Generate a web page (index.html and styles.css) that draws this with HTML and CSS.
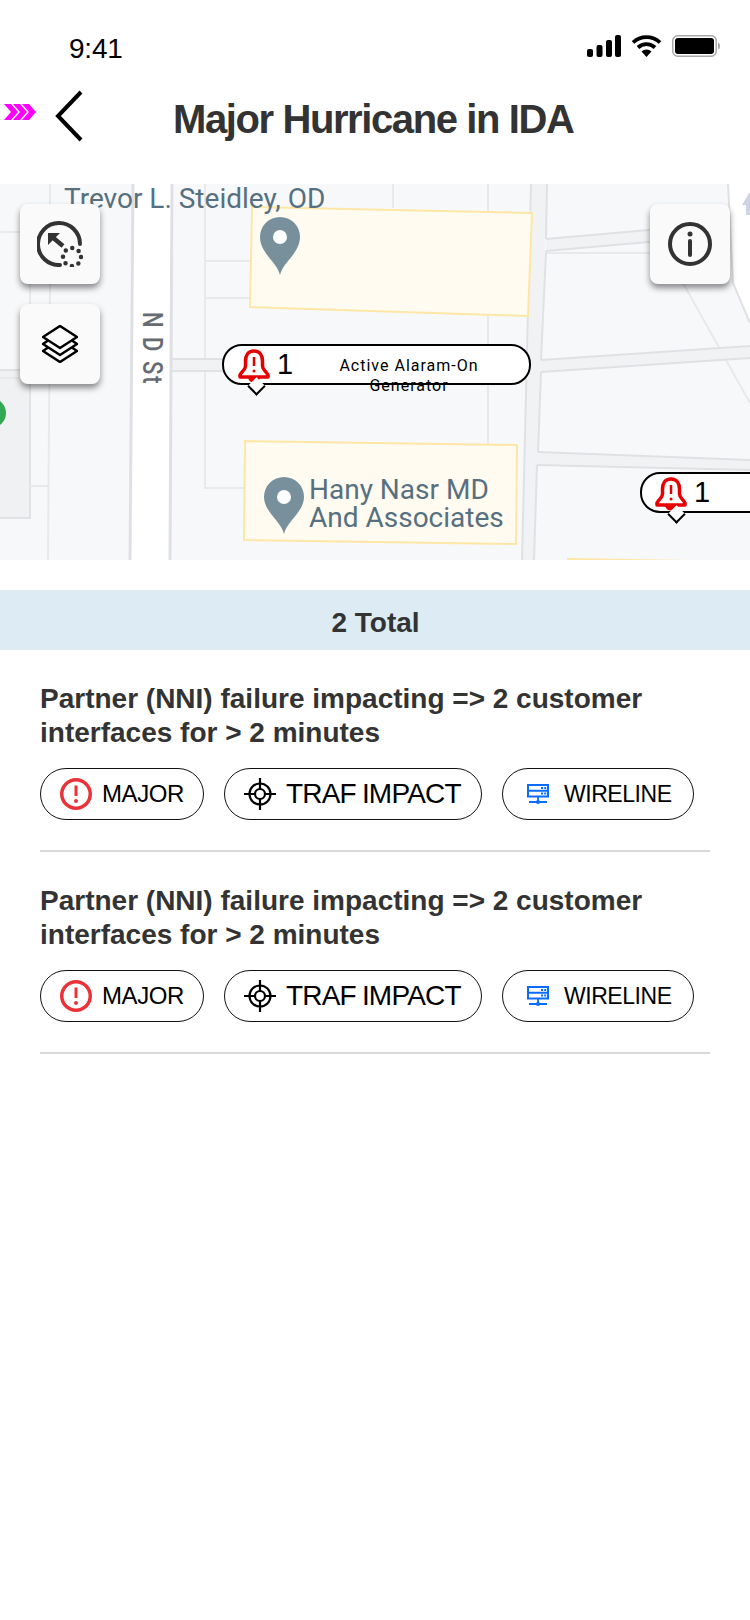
FILE: index.html
```html
<!DOCTYPE html>
<html lang="en">
  <head>
    <meta charset="UTF-8" />
    <meta name="viewport" content="width=device-width, initial-scale=1.0" />
    <title>Major Hurricane in IDA</title>
    <link rel="stylesheet" href="styles.css">
  </head>
  <body>
    <svg class="defs" width="0" height="0">
      <symbol id="bell" viewBox="0 0 32 34">
        <path d="M16 2C10 2 7.500 6.500 7.500 12V17C7.500 21 3.500 22.500 2 26V28H30V26C28.500 22.500 24.500 21 24.500 17V12C24.500 6.500 22 2 16 2Z" fill="none" stroke="#e60000" stroke-width="3.500" stroke-linejoin="round" />
        <path d="M16 8V17" stroke="#e60000" stroke-width="2.500" />
        <circle cx="16" cy="22" r="1.500" fill="#e60000" />
        <path d="M10 28H22A6 5.500 0 0 1 10 28Z" fill="#e60000" />
      </symbol>
      <symbol id="major" viewBox="0 0 32 32">
        <circle cx="16" cy="16" r="14.250" fill="none" stroke="#ea3339" stroke-width="3.500" />
        <path d="M16 7.500V18" stroke="#ea3339" stroke-width="3" />
        <circle cx="16" cy="23" r="2" fill="#ea3339" />
      </symbol>
      <symbol id="target" viewBox="0 0 32 32">
        <g fill="none" stroke="#000">
          <circle cx="16" cy="16" r="10.500" stroke-width="2.200" />
          <circle cx="16" cy="16" r="5" stroke-width="2.200" />
          <path d="M16 0V12M16 20V32M0 16H12M20 16H32" stroke-width="2.200" />
        </g>
      </symbol>
      <symbol id="server" viewBox="0 0 22 20">
        <g fill="none" stroke="#0a6cff">
          <rect x="1" y="1" width="20" height="11.500" stroke-width="2" />
          <path d="M1 6.750H21" stroke-width="2" />
          <path d="M11 12V17M2 18H20" stroke-width="1.800" />
        </g>
        <path d="M14 3h2v2h-2zM17.200 3h2v2h-2zM14 8.500h2v2h-2zM17.200 8.500h2v2h-2z" fill="#0a6cff" />
        <circle cx="11" cy="18" r="2" fill="#0a6cff" />
      </symbol>
    </svg>

    <div class="status-bar">
      <span class="time">9:41</span>
      <div class="status-icons">
        <svg width="34" height="22" viewBox="0 0 34 22">
          <rect x="0" y="14" width="6" height="8" rx="2" />
          <rect x="9.500" y="10" width="6" height="12" rx="2" />
          <rect x="19" y="5" width="6" height="17" rx="2" />
          <rect x="28" y="0" width="6" height="22" rx="2" />
        </svg>
        <svg width="31" height="22" viewBox="0 0 31 22">
          <path d="M2 7.500A19.500 19.500 0 0 1 29 7.500M7 12.500A12.500 12.500 0 0 1 24 12.500" fill="none" stroke="#000" stroke-width="3.800" />
          <path d="M10.500 16.500A7 7 0 0 1 20.500 16.500L15.500 22Z" />
        </svg>
        <svg width="48" height="22" viewBox="0 0 48 22">
          <rect x="0.750" y="0.750" width="43.500" height="20.500" rx="5" fill="none" stroke="#a8a8a8" stroke-width="1.500" />
          <rect x="3" y="3" width="39" height="16" rx="3" />
          <path d="M46 7.500C47.500 8 48 9.500 48 11S47.500 14 46 14.500Z" fill="#a8a8a8" />
        </svg>
      </div>
    </div>

    <div class="nav-bar">
      <svg class="nav-arrows" width="32" height="16" viewBox="0 0 32 16">
        <path d="M0 0H7L14 8L7 16H0L7 8ZM9 0H16L23 8L16 16H9L16 8ZM18 0H25L32 8L25 16H18L25 8Z" fill="#ff00ff" />
      </svg>
      <svg class="nav-back" width="28" height="52" viewBox="0 0 28 52">
        <path d="M26 2L3 26L26 50" fill="none" stroke="#000" stroke-width="4" />
      </svg>
      <h1 class="nav-title">Major Hurricane in IDA</h1>
    </div>

    <div class="map">
      <svg class="map-base" width="750" height="376" viewBox="0 184 750 376">
        <rect x="0" y="184" width="750" height="376" fill="#f7f8fa" />
        <path d="M-2 370H30V518H-2Z" fill="#f0f1f3" stroke="#e1e2e5" stroke-width="2" />
        <circle cx="-9" cy="413" r="15" fill="#34a853" />

        <g fill="none" stroke="#e8e9eb" stroke-width="2">
          <path d="M0 232H50V184M30 284V370M50 284L48 560M30 486H48M0 378H20" />
          <path d="M205 184V488H245M205 261H252M205 298H250" />
          <path d="M393 184V208M488 184V212M488 316V512" />
          <path d="M683 283L750 403" />
          <path d="M545 253H650" />
        </g>

        <path d="M728 184L733 283L750 323V184Z" fill="#fff" />
        <path d="M728 184L733 283L750 323" fill="none" stroke="#e0e1e5" stroke-width="2" />
        <path d="M749 193L742 205H746V215H750V193Z" fill="#cfd3e6" />

        <g fill="#f1f2f4">
          <path d="M172 359H530V371H172Z" />
          <path d="M541 360L750 346V358L541 372Z" />
          <path d="M546 239L660 229V241L546 251Z" />
          <path d="M538 452L750 460V470L537 465Z" />
          <path d="M531 184H547L534 560H522Z" />
        </g>
        <g fill="none" stroke="#e0e1e5" stroke-width="2">
          <path d="M172 359H530M172 371H530" />
          <path d="M541 360L750 346M541 372L750 358" />
          <path d="M546 239L660 229M546 251L660 241" />
          <path d="M538 452L750 460M537 465L750 470" />
          <path d="M531 184L522 560" />
          <path d="M547 184L546 239M546 251L541 360M541 372L538 452M537 465L534 560" />
        </g>

        <path d="M133 184H172L170 560H130Z" fill="#fff" />
        <path d="M133 184L130 560M172 184L170 560" fill="none" stroke="#dfe0e4" stroke-width="3" />

        <g fill="#fffbf0" stroke="#fde6a6" stroke-width="2">
          <path d="M252 207L532 213L528 316L250 307Z" />
          <path d="M245 441L517 445L516 544L244 540Z" />
          <path d="M568 559L750 562V580H568Z" />
        </g>

        <path d="M280 275C277 262 260 253 260 237A20 20 0 0 1 300 237C300 253 283 262 280 275Z" fill="#78909c" />
        <circle cx="280" cy="237" r="7" fill="#fff" />
        <path d="M284 534C281 521 264 512 264 497A20 20 0 0 1 304 497C304 512 287 521 284 534Z" fill="#78909c" />
        <circle cx="284" cy="497" r="7" fill="#fff" />
      </svg>

      <span class="map-label label-trevor">Trevor L. Steidley, OD</span>
      <span class="map-label label-hany">Hany Nasr MD<br>And Associates</span>
      <span class="street-label">N D St</span>

      <button class="map-btn btn-recenter">
        <svg width="46" height="46" viewBox="0 0 46 46">
          <path d="M43 23A21 21 0 1 0 23 44" fill="none" stroke="#333" stroke-width="4" stroke-linecap="round" />
          <path d="M14 15L26 25" stroke="#333" stroke-width="4.500" />
          <path d="M11 12H23L11 24Z" fill="#333" />
          <circle cx="35" cy="36" r="9" fill="none" stroke="#333" stroke-width="4.500" stroke-linecap="round" stroke-dasharray="0 7.070" />
        </svg>
      </button>
      <button class="map-btn btn-layers">
        <svg width="36" height="38" viewBox="0 0 36 38">
          <g fill="none" stroke="#000" stroke-width="2.500" stroke-linejoin="round">
            <path d="M18 1L35 12L18 23L1 12Z" />
            <path d="M6 15.500L1 19L18 30L35 19L30 15.500" />
            <path d="M6 22.500L1 26L18 37L35 26L30 22.500" />
          </g>
        </svg>
      </button>
      <button class="map-btn btn-info">
        <svg width="44" height="44" viewBox="0 0 44 44">
          <circle cx="22" cy="22" r="20" fill="none" stroke="#333" stroke-width="4" />
          <circle cx="22" cy="12" r="2.500" fill="#333" />
          <path d="M22 19V33" stroke="#333" stroke-width="4" stroke-linecap="round" />
        </svg>
      </button>

      <div class="alert alert-one">
        <svg class="alert-bell" width="32" height="34"><use href="#bell" /></svg>
        <span class="alert-count">1</span>
        <span class="alert-text">Active Alaram-On Generator</span>
      </div>
      <div class="alert alert-two">
        <svg class="alert-bell" width="32" height="34"><use href="#bell" /></svg>
        <span class="alert-count">1</span>
      </div>
    </div>

    <div class="total-band">2 Total</div>

    <div class="list">
      <div class="item">
        <div class="item-title">Partner (NNI) failure impacting =&gt; 2 customer interfaces for &gt; 2 minutes</div>
        <div class="chips">
          <div class="chip chip-major">
            <svg width="32" height="32"><use href="#major" /></svg>
            <span>MAJOR</span>
          </div>
          <div class="chip chip-traf">
            <svg width="32" height="32"><use href="#target" /></svg>
            <span>TRAF IMPACT</span>
          </div>
          <div class="chip chip-wire">
            <svg width="22" height="20"><use href="#server" /></svg>
            <span>WIRELINE</span>
          </div>
        </div>
      </div>
      <div class="item">
        <div class="item-title">Partner (NNI) failure impacting =&gt; 2 customer interfaces for &gt; 2 minutes</div>
        <div class="chips">
          <div class="chip chip-major">
            <svg width="32" height="32"><use href="#major" /></svg>
            <span>MAJOR</span>
          </div>
          <div class="chip chip-traf">
            <svg width="32" height="32"><use href="#target" /></svg>
            <span>TRAF IMPACT</span>
          </div>
          <div class="chip chip-wire">
            <svg width="22" height="20"><use href="#server" /></svg>
            <span>WIRELINE</span>
          </div>
        </div>
      </div>
    </div>
  </body>
</html>
```

FILE: styles.css
```css
body {
  margin: 0;
  overflow: hidden;
  background: #ffffff;
  font-family: 'Liberation Sans', Arial, sans-serif;
  color: #333333;
}
svg {
  display: block;
  flex: none;
}
.defs {
  position: absolute;
}

.status-bar {
  height: 74px;
  box-sizing: border-box;
  padding: 33px 30px 0 69px;
  display: flex;
  justify-content: space-between;
  align-items: flex-start;
}
.time {
  font-size: 28px;
  line-height: 32px;
  letter-spacing: -0.2px;
  color: #000000;
}
.status-icons {
  display: flex;
  align-items: center;
  gap: 10px;
  padding-top: 2px;
}

.nav-bar {
  height: 110px;
  box-sizing: border-box;
  padding: 18px 0 0 4px;
  display: flex;
  align-items: flex-start;
}
.nav-arrows {
  margin-top: 12px;
}
.nav-back {
  margin-left: 19px;
  margin-top: -2px;
}
.nav-title {
  margin: 5px 0 0 90px;
  font-size: 40px;
  line-height: 44px;
  font-weight: bold;
  letter-spacing: -1.4px;
  white-space: nowrap;
  color: #333333;
}

.map {
  position: relative;
  height: 376px;
  overflow: hidden;
}
.map-label {
  position: absolute;
  font-family: Roboto, sans-serif;
  font-size: 28px;
  line-height: 28px;
  color: #56707f;
  white-space: nowrap;
}
.label-trevor {
  left: 64px;
  top: 1px;
}
.label-hany {
  left: 309px;
  top: 292px;
}
.street-label {
  position: absolute;
  left: 130px;
  top: 128px;
  font-family: Roboto, sans-serif;
  font-size: 22px;
  line-height: 26px;
  font-weight: 500;
  letter-spacing: 2px;
  color: #666b72;
  white-space: nowrap;
  transform: rotate(90deg) scaleY(1.28);
  transform-origin: 17px 17px;
}

.map-btn {
  position: absolute;
  width: 80px;
  height: 80px;
  padding: 0;
  border: 0;
  border-radius: 8px;
  background: #fafafa;
  box-shadow: 0 4px 6px rgba(0, 0, 0, 0.45);
  display: flex;
  align-items: center;
  justify-content: center;
}
.btn-recenter {
  left: 20px;
  top: 20px;
}
.btn-layers {
  left: 20px;
  top: 120px;
}
.btn-info {
  left: 650px;
  top: 20px;
}

.alert {
  position: absolute;
  height: 41px;
  box-sizing: border-box;
  border: 2px solid #000000;
  border-radius: 20px;
  background: #ffffff;
  display: flex;
  align-items: center;
  color: #000000;
}
.alert::after {
  content: "";
  position: absolute;
  bottom: -10px;
  width: 13px;
  height: 13px;
  box-sizing: border-box;
  background: #ffffff;
  border-right: 2px solid #000000;
  border-bottom: 2px solid #000000;
  transform: rotate(45deg);
}
.alert-one {
  left: 222px;
  top: 160px;
  width: 309px;
}
.alert-one::after {
  left: 26px;
}
.alert-two {
  left: 640px;
  top: 288px;
  width: 130px;
}
.alert-two::after {
  left: 28px;
}
.alert-bell {
  margin-left: 14px;
  margin-top: 2px;
}
.alert-two .alert-bell {
  margin-left: 13px;
}
.alert-count {
  margin-left: 7px;
  font-size: 29px;
}
.alert-text {
  position: absolute;
  left: 107px;
  top: 10px;
  width: 156px;
  font-family: Roboto, sans-serif;
  font-size: 16px;
  line-height: 20px;
  letter-spacing: 1px;
  text-align: center;
}

.total-band {
  margin-top: 30px;
  height: 60px;
  padding-left: 1px;
  background: #dcebf4;
  font-size: 28px;
  line-height: 65px;
  font-weight: bold;
  text-align: center;
}

.list {
  padding: 0 40px;
}
.item {
  padding: 32px 0 30px;
  border-bottom: 2px solid #d8d8d8;
}
.item-title {
  font-size: 28px;
  line-height: 34px;
  font-weight: bold;
  margin-bottom: 18px;
}
.chips {
  display: flex;
  gap: 20px;
}
.chip {
  height: 52px;
  box-sizing: border-box;
  border: 1.5px solid #111111;
  border-radius: 26px;
  display: flex;
  align-items: center;
  color: #000000;
  font-size: 24px;
  white-space: nowrap;
}
.chip-major {
  width: 164px;
  padding-left: 19px;
  gap: 10px;
  letter-spacing: -0.4px;
}
.chip-traf {
  width: 258px;
  padding-left: 19px;
  gap: 10px;
  font-size: 28px;
  letter-spacing: -0.8px;
  word-spacing: -1px;
}
.chip-wire {
  width: 192px;
  padding-left: 24px;
  gap: 15px;
  font-size: 23px;
  letter-spacing: -0.45px;
}
```
